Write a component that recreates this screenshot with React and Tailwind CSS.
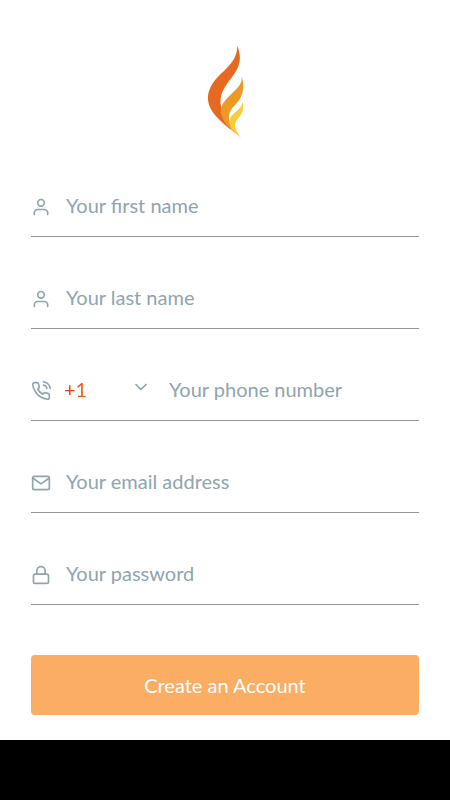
import { FiChevronDown, FiLock, FiMail, FiPhoneCall, FiUser } from "react-icons/fi";

const inputClass =
  "h-8 min-w-0 flex-1 bg-transparent pb-1 text-xl text-[#455a64] placeholder:text-[#90a4ae] placeholder:opacity-100 outline-none";

function Flame() {
  return (
    <svg viewBox="0 0 180 300" className="h-[100px] w-[60px]" role="img" aria-label="Flame logo">
      <path
        fill="#e76821"
        d="M127 17C136 40 138 62 128 84C116 110 88 134 79 165C74 184 78 202 82 220L108 270C72 240 42 213 39 180C37 150 53 126 76 103C104 77 127 54 127 17Z"
      />
      <path
        fill="#ee9825"
        d="M140 109C147 132 147 156 135 176C124 194 106 204 102 226C100 244 108 260 122 281C100 262 81 241 77 217C76 194 91 180 111 160C130 143 142 131 140 109Z"
      />
      <path
        fill="#f7cc36"
        d="M143 182C146 200 145 214 137 225C129 236 121 243 120 256C120 268 127 278 138 293C118 278 103 263 103 245C104 230 114 222 126 212C138 202 143 194 143 182Z"
      />
    </svg>
  );
}

function Field({ id, label, type, icon: Icon, autoComplete }) {
  return (
    <div className="flex h-[60px] items-center gap-[15px] border-b border-[#969696]">
      <label htmlFor={id} aria-label={label}>
        <Icon size={20} className="text-[#90a4ae]" />
      </label>
      <input id={id} name={id} type={type} placeholder={label} autoComplete={autoComplete} className={inputClass} />
    </div>
  );
}

function PhoneField() {
  return (
    <div className="flex h-[60px] items-center border-b border-[#969696]">
      <label htmlFor="phone" aria-label="Your phone number">
        <FiPhoneCall size={20} className="text-[#90a4ae]" />
      </label>
      <div className="ml-[13px] grid w-[87px] grid-cols-1 items-center">
        <select
          id="country"
          aria-label="Country code"
          className="col-start-1 row-start-1 h-8 w-full appearance-none bg-linear-to-r from-[#dd2c00] from-0% to-[#ff6d20] to-30% bg-clip-text pb-1 text-xl text-transparent outline-none"
        >
          <option value="1">+1</option>
          <option value="44">+44</option>
          <option value="61">+61</option>
        </select>
        <FiChevronDown
          size={20}
          className="pointer-events-none col-start-1 row-start-1 mb-2 justify-self-end text-[#90a4ae]"
        />
      </div>
      <input
        id="phone"
        name="phone"
        type="tel"
        placeholder="Your phone number"
        autoComplete="tel-national"
        className={inputClass + " ml-[18px]"}
      />
    </div>
  );
}

export default function App() {
  return (
    <div className="flex min-h-screen flex-col bg-white font-['Lato',sans-serif]">
      <main className="flex-1 px-[31px] pt-10 pb-[25px]">
        <header className="flex justify-center">
          <Flame />
        </header>
        <form className="mt-[37px]" onSubmit={(event) => event.preventDefault()}>
          <div className="flex flex-col gap-8">
            <Field id="firstName" label="Your first name" type="text" icon={FiUser} autoComplete="given-name" />
            <Field id="lastName" label="Your last name" type="text" icon={FiUser} autoComplete="family-name" />
            <PhoneField />
            <Field id="email" label="Your email address" type="email" icon={FiMail} autoComplete="email" />
            <Field id="password" label="Your password" type="password" icon={FiLock} autoComplete="new-password" />
          </div>
          <button type="submit" className="mt-[50px] h-[60px] w-full rounded bg-[#fbad64] text-xl text-white">
            Create an Account
          </button>
        </form>
      </main>
      <footer className="h-[60px] bg-black" />
    </div>
  );
}
